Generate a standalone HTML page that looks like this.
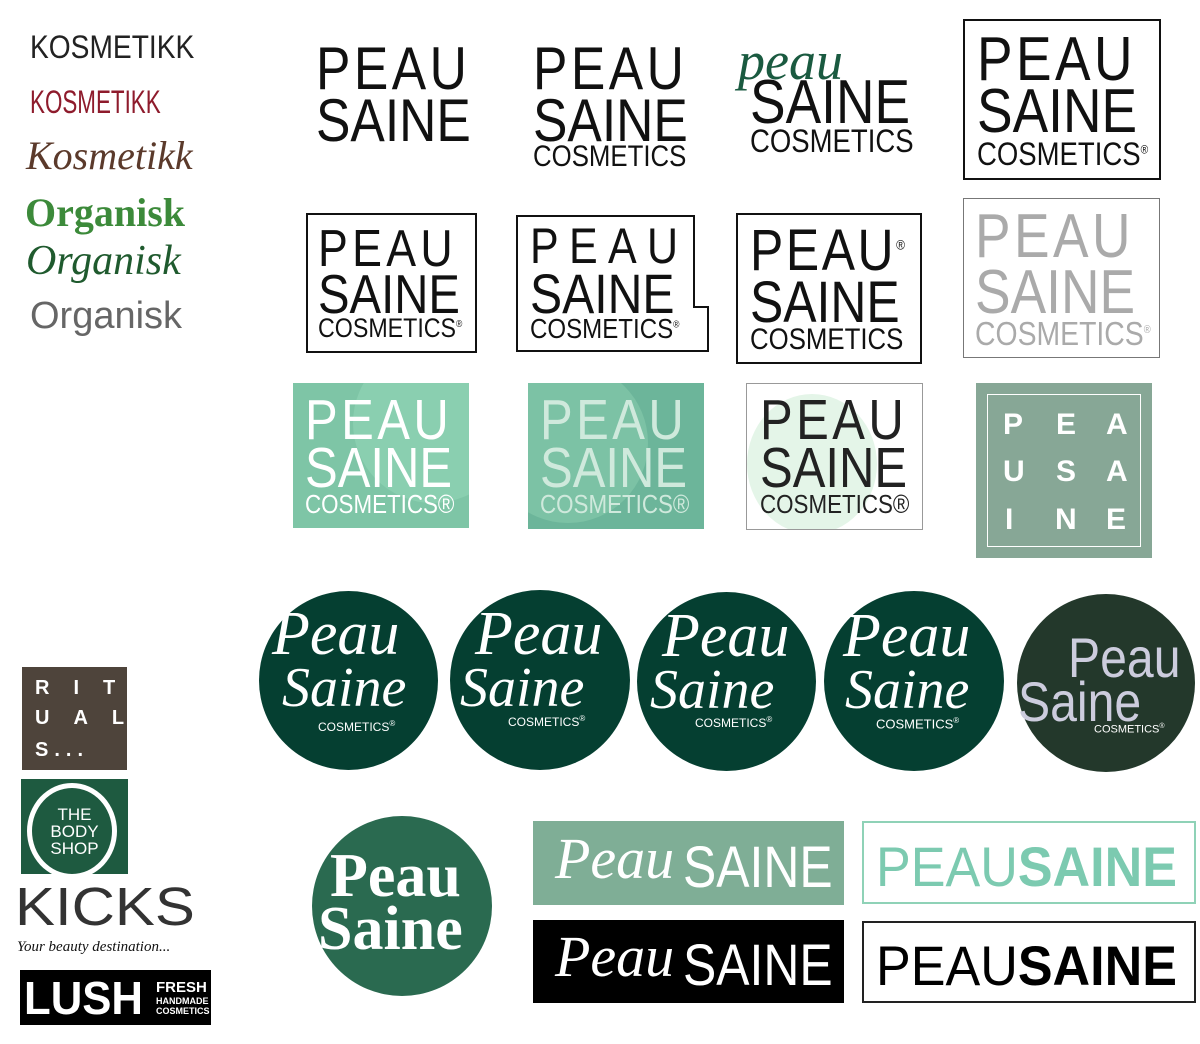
<!DOCTYPE html>
<html><head><meta charset="utf-8"><style>
body{margin:0;width:1200px;height:1044px;background:#fff;position:relative;overflow:hidden;font-family:"Liberation Sans",sans-serif}
.t{position:absolute;line-height:1;white-space:nowrap;transform-origin:0 0}
.s{transform:scaleX(.86)}
.b{position:absolute;box-sizing:border-box}
.c{position:absolute;border-radius:50%}
.scr{font-family:"Liberation Serif",serif;font-style:italic;color:#fff}
.p{letter-spacing:4px}
</style></head><body>

<div class="t" style="left:30px;top:31px;font-size:32px;color:#222;transform:scaleX(.88)">KOSMETIKK</div>
<div class="t" style="left:30px;top:86px;font-size:32px;color:#8e1b2c;transform:scaleX(.7)">KOSMETIKK</div>
<div class="t scr" style="left:26px;top:136px;font-size:40px;color:#5b3a2b">Kosmetikk</div>
<div class="t" style="left:25px;top:193px;font-size:40px;color:#3c8a3a;font-family:'Liberation Serif',serif;font-weight:bold">Organisk</div>
<div class="t scr" style="left:26px;top:240px;font-size:42px;color:#1f5a2e">Organisk</div>
<div class="t" style="left:30px;top:297px;font-size:38px;color:#666">Organisk</div>

<div class="t s p" style="left:316px;top:39px;font-size:60px;color:#111">PEAU</div>
<div class="t s" style="left:316px;top:91px;font-size:60px;color:#111">SAINE</div>

<div class="t s p" style="left:533px;top:39px;font-size:60px;color:#111">PEAU</div>
<div class="t s" style="left:533px;top:91px;font-size:60px;color:#111">SAINE</div>
<div class="t s" style="left:533px;top:142px;font-size:30px;color:#111">COSMETICS</div>

<div class="t scr" style="left:738px;top:34px;font-size:54px;color:#1a5a40">peau</div>
<div class="t s" style="left:750px;top:72px;font-size:62px;color:#111">SAINE</div>
<div class="t s" style="left:750px;top:125px;font-size:32px;color:#111">COSMETICS</div>

<div class="b" style="left:963px;top:19px;width:198px;height:161px;border:2px solid #111"></div>
<div class="t s p" style="left:977px;top:29px;font-size:62px;color:#111">PEAU</div>
<div class="t s" style="left:977px;top:81px;font-size:62px;color:#111">SAINE</div>
<div class="t s" style="left:977px;top:138px;font-size:32px;color:#111">COSMETICS<sup style="font-size:12px">®</sup></div>

<div class="b" style="left:306px;top:213px;width:171px;height:140px;border:2px solid #111"></div>
<div class="t s" style="left:318px;top:223px;font-size:52px;letter-spacing:5px;color:#111">PEAU</div>
<div class="t s" style="left:318px;top:267px;font-size:55px;color:#111">SAINE</div>
<div class="t s" style="left:318px;top:315px;font-size:27px;color:#111">COSMETICS<sup style="font-size:10px">®</sup></div>

<svg style="position:absolute;left:0;top:0" width="1200" height="1044"><path d="M517 216H694V307H708V351H517Z" fill="none" stroke="#111" stroke-width="2"/></svg>
<div class="t s" style="left:530px;top:221px;font-size:50px;letter-spacing:12px;color:#111">PEAU</div>
<div class="t s" style="left:530px;top:266px;font-size:56px;color:#111">SAINE</div>
<div class="t s" style="left:530px;top:315px;font-size:28px;color:#111">COSMETICS<sup style="font-size:10px">®</sup></div>

<div class="b" style="left:736px;top:213px;width:186px;height:151px;border:2px solid #111"></div>
<div class="t s" style="left:750px;top:222px;font-size:58px;letter-spacing:3px;color:#111">PEAU<sup style="font-size:14px">®</sup></div>
<div class="t s" style="left:750px;top:274px;font-size:58px;color:#111">SAINE</div>
<div class="t s" style="left:750px;top:325px;font-size:30px;color:#111">COSMETICS</div>

<div class="b" style="left:963px;top:198px;width:197px;height:160px;border:1px solid #777"></div>
<div class="t s p" style="left:975px;top:206px;font-size:62px;color:#aaa">PEAU</div>
<div class="t s" style="left:975px;top:262px;font-size:62px;color:#aaa">SAINE</div>
<div class="t s" style="left:975px;top:317px;font-size:33px;color:#aaa">COSMETICS<sup style="font-size:11px">®</sup></div>

<div class="b" style="left:293px;top:383px;width:176px;height:145px;background:#7ec5a6;overflow:hidden"><div class="c" style="left:60px;top:-40px;width:160px;height:160px;background:#8acfb0"></div></div>
<div class="t s p" style="left:305px;top:392px;font-size:57px;color:#fff">PEAU</div>
<div class="t s" style="left:305px;top:440px;font-size:57px;color:#fff">SAINE</div>
<div class="t s" style="left:305px;top:491px;font-size:26px;color:#fff">COSMETICS®</div>

<div class="b" style="left:528px;top:383px;width:176px;height:146px;background:#6cb59a;overflow:hidden"><div class="c" style="left:-40px;top:-20px;width:160px;height:160px;background:#7cc2a5"></div></div>
<div class="t s p" style="left:540px;top:392px;font-size:57px;color:#cfe9dc">PEAU</div>
<div class="t s" style="left:540px;top:440px;font-size:57px;color:#cfe9dc">SAINE</div>
<div class="t s" style="left:540px;top:491px;font-size:26px;color:#cfe9dc">COSMETICS®</div>

<div class="b" style="left:746px;top:383px;width:177px;height:147px;border:1px solid #999;overflow:hidden;background:#fff"><div class="c" style="left:0;top:10px;width:130px;height:140px;background:#e4f5e8"></div></div>
<div class="t s p" style="left:760px;top:392px;font-size:57px;color:#222">PEAU</div>
<div class="t s" style="left:760px;top:440px;font-size:57px;color:#222">SAINE</div>
<div class="t s" style="left:760px;top:491px;font-size:26px;color:#222">COSMETICS®</div>

<div class="b" style="left:976px;top:383px;width:176px;height:175px;background:#87a796"></div>
<div class="b" style="left:987px;top:394px;width:154px;height:153px;border:1px solid #fff"></div>
<div class="t" style="left:1003px;top:410px;font-size:30px;color:#fff;font-weight:bold">P</div>
<div class="t" style="left:1056px;top:410px;font-size:30px;color:#fff;font-weight:bold">E</div>
<div class="t" style="left:1106px;top:410px;font-size:30px;color:#fff;font-weight:bold">A</div>
<div class="t" style="left:1003px;top:457px;font-size:30px;color:#fff;font-weight:bold">U</div>
<div class="t" style="left:1056px;top:457px;font-size:30px;color:#fff;font-weight:bold">S</div>
<div class="t" style="left:1106px;top:457px;font-size:30px;color:#fff;font-weight:bold">A</div>
<div class="t" style="left:1005px;top:505px;font-size:30px;color:#fff;font-weight:bold">I</div>
<div class="t" style="left:1055px;top:505px;font-size:30px;color:#fff;font-weight:bold">N</div>
<div class="t" style="left:1106px;top:505px;font-size:30px;color:#fff;font-weight:bold">E</div>

<div class="c" style="left:259px;top:591px;width:179px;height:179px;background:#053f31"></div>
<div class="t scr" style="left:272px;top:603px;font-size:62px">Peau</div>
<div class="t scr" style="left:282px;top:660px;font-size:56px">Saine</div>
<div class="t" style="left:318px;top:720px;font-size:12px;color:#fff">COSMETICS<sup style="font-size:8px">®</sup></div>

<div class="c" style="left:450px;top:590px;width:180px;height:180px;background:#053f31"></div>
<div class="t scr" style="left:475px;top:603px;font-size:62px">Peau</div>
<div class="t scr" style="left:460px;top:660px;font-size:56px">Saine</div>
<div class="t" style="left:508px;top:715px;font-size:12px;color:#fff">COSMETICS<sup style="font-size:8px">®</sup></div>

<div class="c" style="left:637px;top:592px;width:179px;height:179px;background:#053f31"></div>
<div class="t scr" style="left:662px;top:605px;font-size:62px">Peau</div>
<div class="t scr" style="left:650px;top:662px;font-size:56px">Saine</div>
<div class="t" style="left:695px;top:716px;font-size:12px;color:#fff">COSMETICS<sup style="font-size:8px">®</sup></div>

<div class="c" style="left:824px;top:591px;width:180px;height:180px;background:#053f31"></div>
<div class="t scr" style="left:843px;top:605px;font-size:62px">Peau</div>
<div class="t scr" style="left:845px;top:662px;font-size:56px">Saine</div>
<div class="t" style="left:876px;top:717px;font-size:13px;color:#fff">COSMETICS<sup style="font-size:8px">®</sup></div>

<div class="c" style="left:1017px;top:594px;width:178px;height:178px;background:#23382b"></div>
<div class="t s" style="left:1068px;top:630px;font-size:56px;color:#ccd">Peau</div>
<div class="t s" style="left:1018px;top:674px;font-size:56px;color:#ccd">Saine</div>
<div class="t" style="left:1094px;top:723px;font-size:11px;color:#fff">COSMETICS<sup style="font-size:7px">®</sup></div>

<div class="c" style="left:312px;top:816px;width:180px;height:180px;background:#2a6a50"></div>
<div class="t" style="left:330px;top:845px;font-size:62px;color:#fff;font-family:'Liberation Serif',serif;font-weight:bold">Peau</div>
<div class="t" style="left:318px;top:898px;font-size:62px;color:#fff;font-family:'Liberation Serif',serif;font-weight:bold">Saine</div>

<div class="b" style="left:533px;top:821px;width:311px;height:84px;background:#7fae96"></div>
<div class="t scr" style="left:555px;top:830px;font-size:58px">Peau</div>
<div class="t s" style="left:683px;top:839px;font-size:58px;color:#fff">SAINE</div>
<div class="b" style="left:533px;top:920px;width:311px;height:83px;background:#000"></div>
<div class="t scr" style="left:555px;top:928px;font-size:58px">Peau</div>
<div class="t s" style="left:683px;top:937px;font-size:58px;color:#fff">SAINE</div>

<div class="b" style="left:862px;top:821px;width:334px;height:83px;border:2px solid #8fd2b7"></div>
<div class="t" style="left:876px;top:839px;font-size:56px;color:#7ccab0;transform:scaleX(.93)">PEAU<b>SAINE</b></div>
<div class="b" style="left:862px;top:921px;width:334px;height:82px;border:2px solid #222"></div>
<div class="t" style="left:876px;top:938px;font-size:56px;color:#000;transform:scaleX(.93)">PEAU<b>SAINE</b></div>

<div class="b" style="left:22px;top:667px;width:105px;height:103px;background:#4e443b"></div>
<div class="t" style="left:35px;top:678px;font-size:20px;color:#fff;font-weight:bold;letter-spacing:24px">RIT</div>
<div class="t" style="left:35px;top:708px;font-size:20px;color:#fff;font-weight:bold;letter-spacing:24px">UAL</div>
<div class="t" style="left:35px;top:740px;font-size:20px;color:#fff;font-weight:bold;letter-spacing:6px">S...</div>
<div class="b" style="left:21px;top:779px;width:107px;height:95px;background:#1e5a40;overflow:hidden"><div class="c" style="left:6px;top:4px;width:90px;height:96px;border:5px solid #fff;box-sizing:border-box"></div></div>
<div class="t" style="left:21px;top:806px;width:107px;text-align:center;font-size:17px;color:#fff;line-height:17px">THE<br>BODY<br>SHOP</div>
<div class="t" style="left:15px;top:880px;font-size:54px;color:#333;transform:scaleX(1.11)">KICKS</div>
<div class="t scr" style="left:17px;top:940px;font-size:15px;color:#111">Your beauty destination...</div>
<div class="b" style="left:20px;top:970px;width:191px;height:55px;background:#000"></div>
<div class="t" style="left:24px;top:975px;font-size:46px;color:#fff;font-weight:bold;transform:scaleX(.95)">LUSH</div>
<div class="t" style="left:156px;top:980px;font-size:15px;color:#fff;font-weight:bold">FRESH</div>
<div class="t" style="left:156px;top:996px;font-size:9px;color:#fff;font-weight:bold;line-height:10px">HANDMADE<br>COSMETICS</div>
</body></html>
